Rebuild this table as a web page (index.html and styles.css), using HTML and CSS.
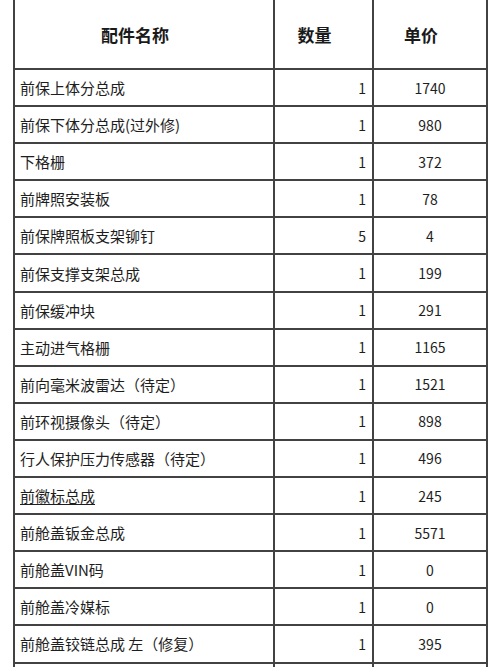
FILE: index.html
```html
<!DOCTYPE html>
<html lang="zh">
<head>
<meta charset="utf-8">
<link rel="stylesheet" href="styles.css">
</head>
<body>
<table class="sheet">
  <colgroup>
    <col class="c-name">
    <col class="c-qty">
    <col class="c-price">
  </colgroup>
  <thead>
    <tr>
      <th>配件名称</th>
      <th>数量</th>
      <th>单价</th>
    </tr>
  </thead>
  <tbody>
    <tr><td class="name">前保上体分总成</td><td class="qty">1</td><td class="price">1740</td></tr>
    <tr><td class="name">前保下体分总成(过外修)</td><td class="qty">1</td><td class="price">980</td></tr>
    <tr><td class="name">下格栅</td><td class="qty">1</td><td class="price">372</td></tr>
    <tr><td class="name">前牌照安装板</td><td class="qty">1</td><td class="price">78</td></tr>
    <tr><td class="name">前保牌照板支架铆钉</td><td class="qty">5</td><td class="price">4</td></tr>
    <tr><td class="name">前保支撑支架总成</td><td class="qty">1</td><td class="price">199</td></tr>
    <tr><td class="name">前保缓冲块</td><td class="qty">1</td><td class="price">291</td></tr>
    <tr><td class="name">主动进气格栅</td><td class="qty">1</td><td class="price">1165</td></tr>
    <tr><td class="name">前向毫米波雷达（待定）</td><td class="qty">1</td><td class="price">1521</td></tr>
    <tr><td class="name">前环视摄像头（待定）</td><td class="qty">1</td><td class="price">898</td></tr>
    <tr><td class="name">行人保护压力传感器（待定）</td><td class="qty">1</td><td class="price">496</td></tr>
    <tr><td class="name"><span class="ul">前徽标总成</span></td><td class="qty">1</td><td class="price">245</td></tr>
    <tr><td class="name">前舱盖钣金总成</td><td class="qty">1</td><td class="price">5571</td></tr>
    <tr><td class="name">前舱盖VIN码</td><td class="qty">1</td><td class="price">0</td></tr>
    <tr><td class="name">前舱盖冷媒标</td><td class="qty">1</td><td class="price">0</td></tr>
    <tr><td class="name">前舱盖铰链总成 左（修复）</td><td class="qty">1</td><td class="price">395</td></tr>
    <tr><td class="name"></td><td class="qty"></td><td class="price"></td></tr>
  </tbody>
</table>
</body>
</html>
```

FILE: styles.css
```css
html, body {
  margin: 0;
  padding: 0;
  background: #ffffff;
  overflow: hidden;
  height: 667px;
}

.sheet {
  margin-left: 13px;
  width: 473px;
  border-collapse: collapse;
  table-layout: fixed;
  font-family: "Noto Sans CJK SC", "Noto Sans", sans-serif;
  color: #1e1e1e;
}

.c-name { width: 260px; }
.c-qty { width: 99px; }
.c-price { width: 114px; }

.sheet th,
.sheet td {
  border: 2px solid #424242;
  padding: 0;
  vertical-align: middle;
  white-space: nowrap;
  overflow: hidden;
}

.sheet thead th {
  border-top: none;
  height: 68px;
  font-size: 17px;
  font-weight: bold;
  text-align: center;
  padding-right: 18px;
  color: #1a1a1a;
}

.sheet tbody tr {
  height: 37.1px;
}

.sheet td.name {
  font-size: 15px;
  padding-left: 5px;
  text-align: left;
}

.sheet td.qty {
  font-size: 14px;
  text-align: right;
  padding-right: 6px;
}

.sheet td.price {
  font-size: 14px;
  text-align: center;
}

.ul {
  text-decoration: underline;
  text-underline-offset: 2px;
}
```
